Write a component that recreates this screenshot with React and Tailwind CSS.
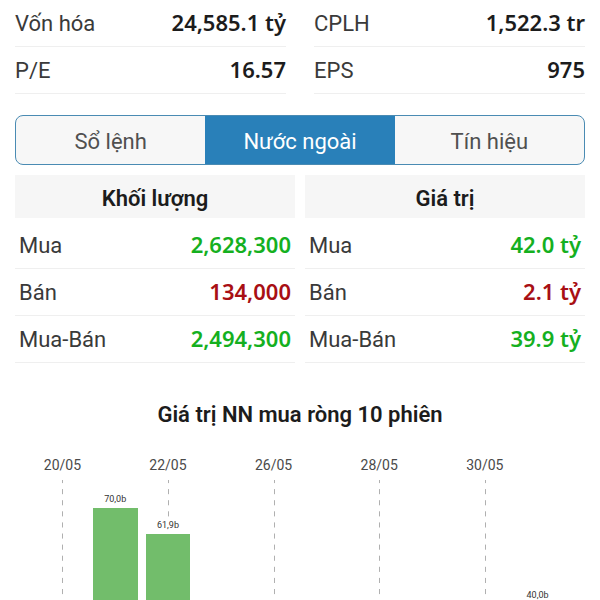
import React, { useState } from 'react';
import clsx from 'clsx';

const STATS = [
  [
    { label: 'Vốn hóa', value: '24,585.1 tỷ' },
    { label: 'P/E', value: '16.57' },
  ],
  [
    { label: 'CPLH', value: '1,522.3 tr' },
    { label: 'EPS', value: '975' },
  ],
];

const TABS = ['Sổ lệnh', 'Nước ngoài', 'Tín hiệu'];

const FOREIGN = [
  {
    title: 'Khối lượng',
    rows: [
      { label: 'Mua', value: '2,628,300', up: true },
      { label: 'Bán', value: '134,000', up: false },
      { label: 'Mua-Bán', value: '2,494,300', up: true },
    ],
  },
  {
    title: 'Giá trị',
    rows: [
      { label: 'Mua', value: '42.0 tỷ', up: true },
      { label: 'Bán', value: '2.1 tỷ', up: false },
      { label: 'Mua-Bán', value: '39.9 tỷ', up: true },
    ],
  },
];

// One entry per session, only every second one carries a date
const SESSIONS = [
  { date: '20/05' },
  { value: 70, text: '70,0b' },
  { date: '22/05', value: 61.9, text: '61,9b' },
  {},
  { date: '26/05' },
  {},
  { date: '28/05' },
  {},
  { date: '30/05' },
  { value: 40, text: '40,0b' },
];

const PX_PER_UNIT = 3.2;
const MAX_VALUE = 70;

function StatList({ items }) {
  return (
    <dl className="flex-1">
      {items.map((item) => (
        <div
          key={item.label}
          className="flex h-[47px] items-baseline justify-between border-b border-[#efefef] pt-2"
        >
          <dt className="text-[#3a3a3a]">{item.label}</dt>
          <dd className="font-['Noto_Sans',sans-serif] font-semibold text-[#1c1c1c]">{item.value}</dd>
        </div>
      ))}
    </dl>
  );
}

function ForeignTable({ title, rows }) {
  return (
    <table className="flex-1 border-separate border-spacing-0">
      <thead>
        <tr>
          <th
            colSpan={2}
            className="h-[47px] border-b-4 border-white bg-[#f6f6f6] pt-1 font-semibold text-[#1c1c1c]"
          >
            {title}
          </th>
        </tr>
      </thead>
      <tbody>
        {rows.map((row) => (
          <tr key={row.label} className="h-[47px] align-baseline">
            <th
              scope="row"
              className="border-b border-[#efefef] pt-2 pl-1 text-left font-normal text-[#3a3a3a]"
            >
              {row.label}
            </th>
            <td
              className={clsx(
                "border-b border-[#efefef] pt-2 pr-1 text-right font-['Noto_Sans',sans-serif] font-semibold",
                row.up ? 'text-[#15b01f]' : 'text-[#a80f14]'
              )}
            >
              {row.value}
            </td>
          </tr>
        ))}
      </tbody>
    </table>
  );
}

function Session({ date, value, text }) {
  return (
    <div className="flex flex-1 flex-col items-center">
      <span className="h-6 shrink-0 text-sm leading-6 whitespace-nowrap text-[#4a4a4a]">{date}</span>
      <div className="relative mt-[3px] w-full flex-1">
        {date && (
          <svg className="absolute left-1/2 h-full w-px" aria-hidden="true">
            <line
              x1="0.5"
              y1="0"
              x2="0.5"
              y2="100%"
              stroke="#b0b0b0"
              strokeDasharray="5.1 6"
              strokeDashoffset="2"
            />
          </svg>
        )}
        {value && (
          <div
            className="relative flex flex-col items-center px-1"
            style={{ paddingTop: 12 + (MAX_VALUE - value) * PX_PER_UNIT }}
          >
            <span className="h-4 bg-white text-[9px] leading-[14px] text-[#333]">{text}</span>
            <div className="w-full bg-[#72bd6b]" style={{ height: value * PX_PER_UNIT }} />
          </div>
        )}
      </div>
    </div>
  );
}

export default function App() {
  const [tab, setTab] = useState('Nước ngoài');

  return (
    <main className="flex h-screen flex-col overflow-hidden bg-white font-['Roboto','Noto_Sans',sans-serif] text-[22px] leading-7">
      <section className="flex gap-7 px-[15px]">
        {STATS.map((items) => (
          <StatList key={items[0].label} items={items} />
        ))}
      </section>

      <nav className="mx-[15px] mt-[21px] flex h-[50px] shrink-0 overflow-hidden rounded-lg border border-[#4a8bb3] bg-[#f7f7f7]">
        {TABS.map((name) => (
          <button
            key={name}
            type="button"
            aria-pressed={tab === name}
            onClick={() => setTab(name)}
            className={clsx(
              'flex-1 cursor-pointer pt-[3px]',
              tab === name ? 'bg-[#2980b9] text-white' : 'text-[#505050]'
            )}
          >
            {name}
          </button>
        ))}
      </nav>

      <section className="mx-[15px] mt-[10px] flex gap-[10px]">
        {FOREIGN.map((table) => (
          <ForeignTable key={table.title} title={table.title} rows={table.rows} />
        ))}
      </section>

      <h2 className="mt-[38px] text-center font-semibold text-[#1c1c1c]">
        Giá trị NN mua ròng 10 phiên
      </h2>
      <section className="mt-6 flex min-h-0 flex-1 px-9">
        {SESSIONS.map((session, i) => (
          <Session key={i} {...session} />
        ))}
      </section>
    </main>
  );
}
